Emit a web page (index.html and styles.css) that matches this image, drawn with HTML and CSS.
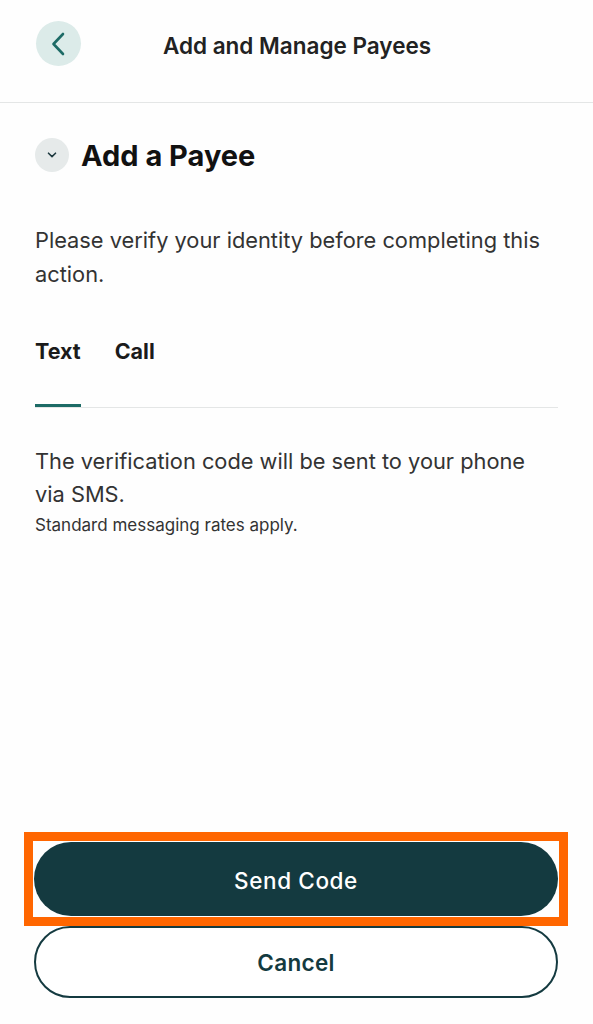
FILE: index.html
```html
<!DOCTYPE html>
<html lang="en">
<head>
<meta charset="utf-8">
<title>Add and Manage Payees</title>
<link rel="stylesheet" href="styles.css">
</head>
<body>
<div class="screen">
  <header class="topbar">
    <button class="back" aria-label="Back">
      <svg width="14" height="24" viewBox="0 0 14 24"><path d="M12 2 L2.5 12 L12 22" fill="none" stroke="#1d6b66" stroke-width="2.6" stroke-linecap="round" stroke-linejoin="round"/></svg>
    </button>
    <h1 class="title">Add and Manage Payees</h1>
  </header>
  <main class="content">
    <div class="section-head">
      <span class="toggle">
        <svg width="10" height="6" viewBox="0 0 10 6"><path d="M1.5 1.2 L5 4.6 L8.5 1.2" fill="none" stroke="#1f3a40" stroke-width="1.6" stroke-linecap="round" stroke-linejoin="round"/></svg>
      </span>
      <h2 class="section-title">Add a Payee</h2>
    </div>
    <p class="lead">Please verify your identity before completing this action.</p>
    <div class="tabs">
      <span class="tab active">Text</span>
      <span class="tab">Call</span>
    </div>
    <p class="info">The verification code will be sent to your phone via SMS.</p>
    <p class="note">Standard messaging rates apply.</p>
  </main>
  <footer class="actions">
    <div class="highlight">
      <button class="btn primary">Send Code</button>
    </div>
    <button class="btn secondary">Cancel</button>
  </footer>
</div>
</body>
</html>
```
FILE: styles.css
```css
* { box-sizing: border-box; }
html, body { margin: 0; padding: 0; background: #fefefe; }
body { font-family: Inter, "Noto Sans", "Liberation Sans", sans-serif; color: #222; }
.screen { width: 593px; height: 1024px; display: flex; flex-direction: column; }
.topbar {
  height: 103px;
  border-bottom: 1px solid #e4e6e6;
  display: flex;
  align-items: flex-start;
  padding: 21px 35px 0 36px;
}
.back {
  width: 45px; height: 45px; border-radius: 50%;
  background: #dcebe9; border: 0; padding: 0 2px 0 0;
  display: flex; align-items: center; justify-content: center;
  flex: none;
}
.title {
  flex: 1;
  margin: 0;
  text-align: center;
  font-size: 22.5px;
  font-weight: 600;
  line-height: 50px;
  color: #222;
  padding-right: 45px;
}
.content { flex: 1; padding: 35px 35px 0 35px; }
.section-head { display: flex; align-items: center; gap: 12px; height: 34px; }
.toggle {
  width: 34px; height: 34px; border-radius: 50%;
  background: #e6eaea;
  display: flex; align-items: center; justify-content: center;
  flex: none;
}
.section-title { margin: 0; font-size: 29px; font-weight: 700; color: #111; }
.lead {
  margin: 51px 0 0;
  font-size: 21.8px; line-height: 34px; color: #333;
}
.tabs {
  margin-top: 43px;
  display: flex;
  gap: 34px;
  border-bottom: 1px solid #e4e6e6;
  width: 523px;
}
.tab {
  font-size: 21.5px; font-weight: 700; color: #1b1b1b;
  line-height: 34px;
  padding-bottom: 39px;
}
.tab.active { box-shadow: inset 0 -3px 0 #1d6b66; }
.info {
  margin: 37px 0 0;
  font-size: 21.8px; line-height: 33px; color: #333;
  width: 523px;
}
.note { margin: 1px 0 0; font-size: 17px; line-height: 26px; color: #333; }
.actions {
  padding: 0 35px 26px 34px;
  display: flex; flex-direction: column; gap: 10px;
}
.highlight {
  outline: 9px solid #ff6600;
  outline-offset: 1px;
}
.btn {
  display: block;
  height: 74px; border-radius: 37px;
  font-family: inherit;
  width: 524px;
}
.primary {
  background: #143a40; color: #fff; border: 0;
  font-size: 22.5px; font-weight: 500; letter-spacing: 0.6px;
  padding-top: 3px;
}
.secondary {
  background: #fff; color: #143a40; border: 2.5px solid #143a40;
  font-weight: 600; font-size: 22.5px; letter-spacing: 0.3px;
  height: 72px;
}
```
